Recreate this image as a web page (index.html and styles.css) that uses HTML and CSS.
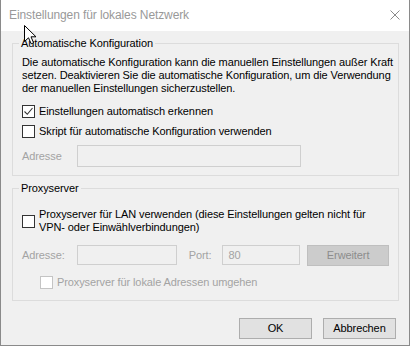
FILE: index.html
```html
<!DOCTYPE html>
<html>
  <head>
    <meta charset="utf-8">
    <title>Einstellungen für lokales Netzwerk</title>
    <link rel="stylesheet" href="styles.css">
  </head>
  <body>
    <div class="window">
      <div class="titlebar">
        <span class="title">Einstellungen für lokales Netzwerk</span>
        <svg class="close" viewBox="0 0 10 10">
          <path d="M0.5,0.5 L9.5,9.5 M9.5,0.5 L0.5,9.5" />
        </svg>
      </div>

      <div class="content">
        <fieldset class="group group--auto">
          <legend>Automatische Konfiguration</legend>
          <p class="desc">Die automatische Konfiguration kann die manuellen Einstellungen außer Kraft<br>setzen. Deaktivieren Sie die automatische Konfiguration, um die Verwendung<br>der manuellen Einstellungen sicherzustellen.</p>

          <label class="check check--first">
            <span class="box">
              <svg viewBox="0 0 11 11"><path d="M1.5,5.5 L4.3,8.3 L9.5,2" /></svg>
            </span>
            Einstellungen automatisch erkennen
          </label>
          <label class="check">
            <span class="box"></span>
            Skript für automatische Konfiguration verwenden
          </label>

          <div class="row row--script">
            <span class="label is-disabled">Adresse</span>
            <span class="input input--script"></span>
          </div>
        </fieldset>

        <fieldset class="group group--proxy">
          <legend>Proxyserver</legend>
          <label class="check check--proxy">
            <span class="box"></span>
            <span>Proxyserver für LAN verwenden (diese Einstellungen gelten nicht für<br>VPN- oder Einwählverbindungen)</span>
          </label>

          <div class="row row--proxy">
            <span class="label is-disabled">Adresse:</span>
            <span class="input input--address"></span>
            <span class="label label--port is-disabled">Port:</span>
            <span class="input input--port">80</span>
            <span class="button button--disabled">Erweitert</span>
          </div>

          <label class="check check--bypass is-disabled">
            <span class="box"></span>
            Proxyserver für lokale Adressen umgehen
          </label>
        </fieldset>

        <div class="actions">
          <span class="button">OK</span>
          <span class="button">Abbrechen</span>
        </div>
      </div>
    </div>

    <svg class="cursor" viewBox="0 0 13 20">
      <path d="M0.5,0.5 L0.5,16.5 L4.5,12.8 L7.2,18.8 L9.6,17.8 L7,11.8 L12,11.8 Z" />
    </svg>
  </body>
</html>
```

FILE: styles.css
```css
body {
  margin: 0;
  background: #fff;
  font-family: 'Liberation Sans', Arial, sans-serif;
  font-size: 11px;
  letter-spacing: -0.1px;
  color: #000;
}
.window {
  width: 408px;
  height: 345px;
  border-left: 1px solid #8a8a8a;
  border-right: 1px solid #8a8a8a;
  border-bottom: 1px solid #8a8a8a;
  background: #f0f0f0;
}
.titlebar {
  display: flex;
  align-items: center;
  justify-content: space-between;
  height: 31px;
  padding: 0 9px 0 8px;
  background: #fff;
}
.title {
  font-size: 12px;
  color: #999;
  margin-top: -1px;
}
.close {
  width: 10px;
  height: 10px;
  margin-top: -1px;
  stroke: #8a8a8a;
  stroke-width: 1;
  fill: none;
}
.content {
  padding: 5px 10px 0 11px;
}
.group {
  margin: 0;
  padding: 5px 9px 8px 9px;
  border: 1px solid #dcdcdc;
  min-width: 0;
}
.group legend {
  margin-left: -3px;
  padding: 0 2px;
  line-height: 15px;
}
.desc {
  margin: 0;
  line-height: 13px;
  white-space: nowrap;
}
.check {
  display: flex;
  align-items: center;
  min-height: 16px;
  line-height: 13px;
  margin-top: 4px;
  white-space: nowrap;
}
.check--first { margin-top: 8px; }
.check--proxy { margin-top: 7px; }
.check--bypass {
  margin-top: 8px;
  padding-left: 18px;
}
.box {
  display: block;
  flex: none;
  width: 11px;
  height: 11px;
  margin-right: 4px;
  border: 1px solid #333;
  background: #fff;
}
.box svg {
  display: block;
  width: 11px;
  height: 11px;
  fill: none;
  stroke: #333;
  stroke-width: 1.1;
}
.is-disabled { color: #a3a3a3; }
.is-disabled .box { border-color: #c4c4c4; }
.row {
  display: flex;
  align-items: center;
}
.row--script { margin-top: 6px; }
.row--proxy { margin-top: 10px; }
.label { width: 55px; }
.label--port {
  width: auto;
  margin-left: 12px;
  margin-right: 11px;
}
.input {
  display: block;
  box-sizing: border-box;
  height: 20px;
  padding: 0 5px;
  border: 1px solid #cfcfcf;
  background: #f0f0f0;
  color: #a3a3a3;
  line-height: 18px;
}
.input--script {
  width: 224px;
  height: 22px;
}
.input--address { width: 100px; }
.input--port { width: 78px; }
.button {
  display: block;
  box-sizing: border-box;
  width: 73px;
  height: 21px;
  border: 1px solid #adadad;
  background: #e1e1e1;
  text-align: center;
  line-height: 19px;
}
.button--disabled {
  width: 82px;
  margin-left: 7px;
  margin-top: 1px;
  border-color: #bfbfbf;
  background: #cccccc;
  color: #8c8c8c;
}
.group--proxy { margin-top: 5px; padding-bottom: 10px; }
.actions {
  display: flex;
  justify-content: flex-end;
  gap: 11px;
  margin-top: 17px;
  padding-right: 3px;
}
.cursor {
  position: absolute;
  top: 25px;
  left: 24px;
  width: 13px;
  height: 20px;
  fill: #fff;
  stroke: #000;
  stroke-width: 1;
  stroke-linejoin: miter;
}
```
